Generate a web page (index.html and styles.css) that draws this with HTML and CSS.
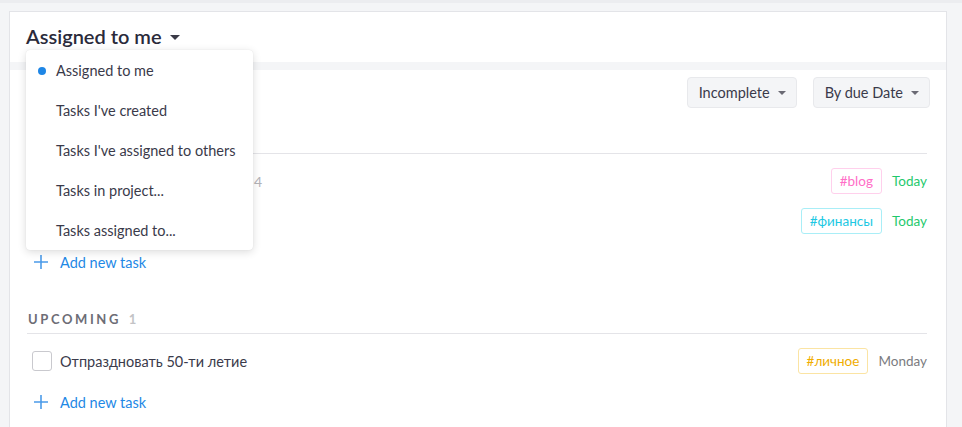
FILE: index.html
```
<!DOCTYPE html>
<html>
<head>
<meta charset="utf-8">
<link rel="stylesheet" href="styles.css">
</head>
<body>
<div class="topline"></div>
<div class="card">
  <div class="header">
    <div class="title">Assigned to me <span class="caret caret-dark"></span></div>
    <div class="menu">
      <div class="menu-item active"><span class="dot"></span>Assigned to me</div>
      <div class="menu-item">Tasks I've created</div>
      <div class="menu-item">Tasks I've assigned to others</div>
      <div class="menu-item">Tasks in project...</div>
      <div class="menu-item">Tasks assigned to...</div>
    </div>
  </div>
  <div class="strip"></div>
  <div class="body">
    <div class="toolbar">
      <button class="btn">Incomplete <span class="caret"></span></button>
      <button class="btn">By due Date <span class="caret"></span></button>
    </div>

    <div class="section first">
      <div class="sec-head"></div>
      <div class="row">
        <span class="check"></span>
        <span class="task covered"></span><span class="sub">4</span>
        <span class="tag pink">#blog</span>
        <span class="date green">Today</span>
      </div>
      <div class="row">
        <span class="check"></span>
        <span class="task covered"></span>
        <span class="tag cyan">#финансы</span>
        <span class="date green">Today</span>
      </div>
      <div class="add">
        <svg class="plus" width="16" height="16" viewBox="0 0 16 16"><path d="M8 1v14M1 8h14" stroke="#4b9be9" stroke-width="1.6" fill="none"/></svg>
        <span>Add new task</span>
      </div>
    </div>

    <div class="section">
      <div class="sec-head">Upcoming <span class="count">1</span></div>
      <div class="row">
        <span class="check"></span>
        <span class="task">Отпраздновать 50-ти летие</span>
        <span class="tag yellow">#личное</span>
        <span class="date grey">Monday</span>
      </div>
      <div class="add">
        <svg class="plus" width="16" height="16" viewBox="0 0 16 16"><path d="M8 1v14M1 8h14" stroke="#4b9be9" stroke-width="1.6" fill="none"/></svg>
        <span>Add new task</span>
      </div>
    </div>
  </div>
</div>
</body>
</html>
```
FILE: styles.css
```
html, body {
  margin: 0;
  padding: 0;
}
body {
  background: #f4f5f7;
  font-family: Lato, "Noto Sans", sans-serif;
  color: #3b3b4b;
  width: 962px;
  height: 427px;
  overflow: hidden;
}
.topline {
  height: 3px;
  background: #ecedf0;
}
.card {
  margin: 8px 0 0 9px;
  width: 938px;
  background: #fff;
  border: 1px solid #e3e4e8;
  border-bottom: none;
  box-sizing: border-box;
  height: 420px;
}
.header {
  position: relative;
  height: 50px;
  padding-left: 16px;
  display: flex;
  align-items: center;
}
.title {
  font-size: 20px;
  font-weight: 600;
  color: #2a2a3a;
  display: flex;
  align-items: center;
  gap: 8px;
  margin-top: -2px;
}
.caret {
  display: inline-block;
  width: 0;
  height: 0;
  border-left: 4px solid transparent;
  border-right: 4px solid transparent;
  border-top: 4px solid #6a6a74;
}
.caret-dark {
  border-left-width: 5px;
  border-right-width: 5px;
  border-top: 5px solid #3a3a46;
  margin-top: 3px;
}
.menu {
  position: absolute;
  left: 16px;
  top: 38px;
  width: 227px;
  background: #fff;
  border-radius: 4px;
  box-shadow: 0 2px 8px rgba(0,0,0,0.14), 0 0 1px rgba(0,0,0,0.12);
  z-index: 10;
}
.menu-item {
  height: 40px;
  display: flex;
  align-items: center;
  padding-left: 30px;
  font-size: 14.5px;
  color: #3a3a4a;
  position: relative;
}
.dot {
  position: absolute;
  left: 12px;
  top: 17px;
  width: 8px;
  height: 8px;
  border-radius: 50%;
  background: #1e86e6;
}
.strip {
  height: 8px;
  background: #f4f5f7;
}
.body {
  padding: 7px 16px 0 17px;
}
.toolbar {
  display: flex;
  justify-content: flex-end;
  gap: 16px;
}
.btn {
  font-family: inherit;
  font-size: 14.5px;
  color: #3a3a4a;
  height: 31px;
  padding: 0 10px 0 11px;
  background: #f4f5f7;
  border: 1px solid #e8e9ec;
  border-radius: 4px;
  display: flex;
  align-items: center;
  gap: 8px;
}
.section {
  padding-right: 3px;
  margin-top: 28px;
}
.section.first {
  margin-top: 23px;
}
.sec-head {
  font-size: 13px;
  font-weight: 700;
  letter-spacing: 2.6px;
  text-transform: uppercase;
  color: #6d6d76;
  line-height: 16px;
  height: 16px;
  padding: 0 0 6px 1px;
  border-bottom: 1px solid #e4e4e8;
  margin-bottom: 7px;
}
.count {
  color: #c3c3c6;
  margin-left: 2px;
}
.row {
  height: 40px;
  display: flex;
  align-items: center;
  padding-left: 5px;
}
.check {
  width: 18px;
  height: 18px;
  border: 1px solid #c9c9ce;
  border-radius: 3px;
  margin-right: 8px;
  flex: none;
}
.task {
  font-size: 14.5px;
  color: #3b3b4b;
}
.task.covered {
  width: 184px;
}
.sub {
  font-size: 14px;
  color: #b3b3b8;
  margin-left: 10px;
}
.tag {
  margin-left: auto;
  height: 26px;
  box-sizing: border-box;
  padding: 0 8px;
  display: flex;
  align-items: center;
  font-size: 13.5px;
  border-radius: 3px;
  border: 1px solid;
}
.pink { color: #ff6ec7; border-color: #ffd0ec; }
.cyan { color: #1cc8e3; border-color: #a9eef7; }
.yellow { color: #f0ad00; border-color: #fbe4a3; }
.date {
  margin-left: 10px;
  font-size: 13.5px;
}
.green { color: #1fc96d; }
.grey { color: #7b7b80; }
.add {
  height: 42px;
  display: flex;
  align-items: center;
  padding-left: 6px;
  color: #1e88e5;
  font-size: 14.5px;
}
.plus {
  margin-right: 11px;
}
```
